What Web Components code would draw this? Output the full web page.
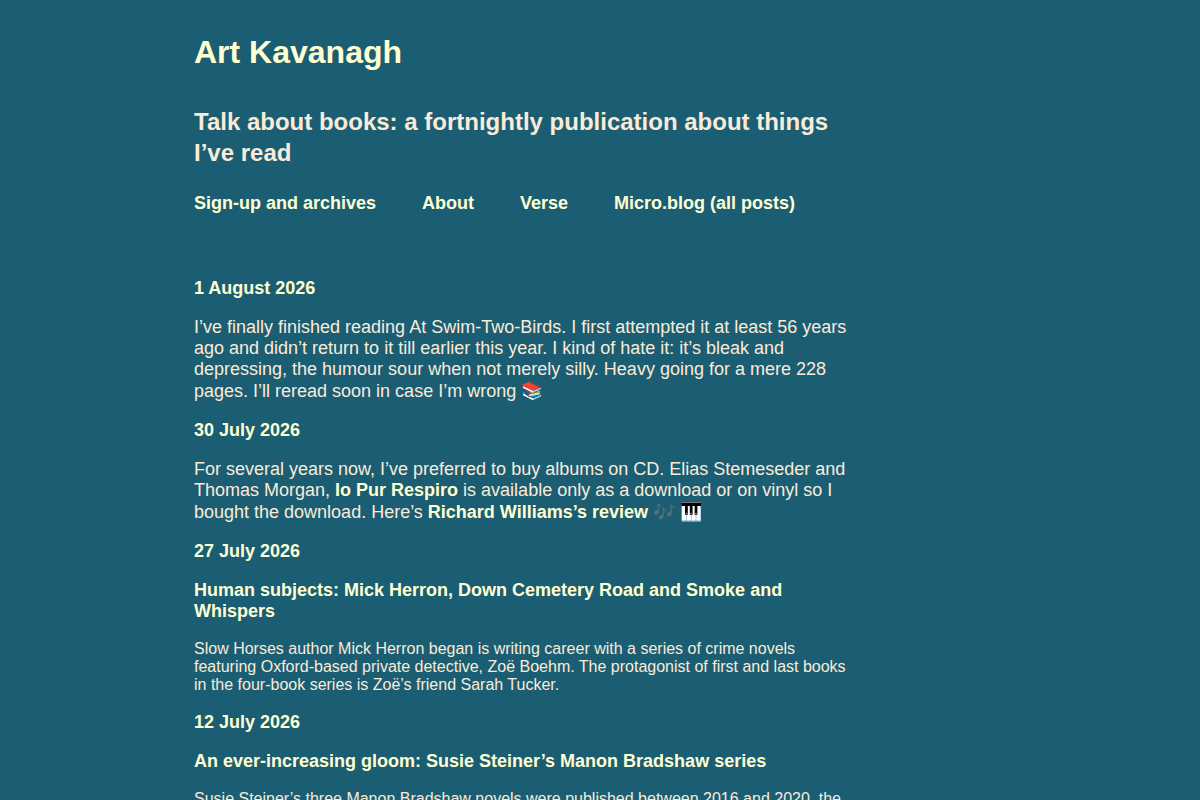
<!DOCTYPE html>
<html lang="en">
<head>
<meta charset="utf-8">
<meta name="viewport" content="width=device-width, initial-scale=1">
<title>Art Kavanagh</title>
<style>
  :root {
    --background: #1b5e74;
    --text: #faebd7;
    --link: #ffffd2;
  }
  body {
    margin: 0;
    background: var(--background);
    color: var(--text);
    font-family: "Liberation Sans", Arial, "Noto Color Emoji", sans-serif;
    font-size: 18px;
  }
  a {
    color: var(--link);
    font-weight: bold;
    text-decoration: none;
  }
</style>
</head>
<body>
<blog-page>
  <site-header slot="header" name="Art Kavanagh" tagline="Talk about books: a fortnightly publication about things I’ve read">
    <a href="#archives">Sign-up and archives</a>
    <a href="#about">About</a>
    <a href="#verse">Verse</a>
    <a href="#posts">Micro.blog (all posts)</a>
  </site-header>

  <blog-post date="1 August 2026">I’ve finally finished reading At Swim-Two-Birds. I first attempted it at least 56 years ago and didn’t return to it till earlier this year. I kind of hate it: it’s bleak and depressing, the humour sour when not merely silly. Heavy going for a mere 228 pages. I’ll reread soon in case I’m wrong 📚</blog-post>

  <blog-post date="30 July 2026">For several years now, I’ve preferred to buy albums on CD. Elias Stemeseder and Thomas Morgan, <a href="#album">Io Pur Respiro</a> is available only as a download or on vinyl so I bought the download. Here’s <a href="#review">Richard Williams’s review</a> 🎶 🎹</blog-post>

  <blog-post date="27 July 2026" heading="Human subjects: Mick Herron, Down Cemetery Road and Smoke and Whispers">Slow Horses author Mick Herron began is writing career with a series of crime novels featuring Oxford-based private detective, Zoë Boehm. The protagonist of first and last books in the four-book series is Zoë’s friend Sarah Tucker.</blog-post>

  <blog-post date="12 July 2026" heading="An ever-increasing gloom: Susie Steiner’s Manon Bradshaw series">Susie Steiner’s three Manon Bradshaw novels were published between 2016 and 2020, the</blog-post>
</blog-page>

<script>
class BlogPage extends HTMLElement {
  constructor() {
    super();
    this.attachShadow({ mode: "open" });
    this.shadowRoot.innerHTML = `
      <style>
        :host {
          display: grid;
          grid-template-columns: 16fr 55fr 29fr;
          padding-top: 34px;
        }
        .column {
          grid-column: 2;
          padding-left: 2px;
        }
        main {
          display: flex;
          flex-direction: column;
          gap: 18px;
          margin-top: 64px;
        }
      </style>
      <div class="column">
        <slot name="header"></slot>
        <main><slot></slot></main>
      </div>
    `;
  }
}

class SiteHeader extends HTMLElement {
  constructor() {
    super();
    this.attachShadow({ mode: "open" });
  }

  connectedCallback() {
    this.shadowRoot.innerHTML = `
      <style>
        :host {
          display: block;
        }
        h1 {
          margin: 0 0 36px;
          font-size: 32px;
          line-height: 36px;
        }
        h1 a {
          color: var(--link);
          text-decoration: none;
        }
        h2 {
          margin: 0 0 25px;
          font-size: 24px;
          line-height: 31px;
        }
        nav {
          display: flex;
          flex-wrap: wrap;
          gap: 18px 46px;
        }
      </style>
      <header>
        <h1><a href="#home">${this.getAttribute("name")}</a></h1>
        <h2>${this.getAttribute("tagline")}</h2>
        <nav><slot></slot></nav>
      </header>
    `;
  }
}

class BlogPost extends HTMLElement {
  constructor() {
    super();
    this.attachShadow({ mode: "open" });
  }

  connectedCallback() {
    const heading = this.getAttribute("heading");

    this.shadowRoot.innerHTML = `
      <style>
        :host {
          display: block;
        }
        article {
          display: flex;
          flex-direction: column;
          align-items: flex-start;
          gap: 18px;
        }
        h3, p {
          margin: 0;
          font-size: 18px;
        }
        p.excerpt {
          font-size: 16px;
        }
        a {
          color: var(--link);
          font-weight: bold;
          text-decoration: none;
        }
      </style>
      <article>
        <a href="#post">${this.getAttribute("date")}</a>
        ${heading ? `<h3><a href="#post">${heading}</a></h3>` : ""}
        <p class="${heading ? "excerpt" : "note"}"><slot></slot></p>
      </article>
    `;
  }
}

customElements.define("blog-page", BlogPage);
customElements.define("site-header", SiteHeader);
customElements.define("blog-post", BlogPost);
</script>
</body>
</html>
